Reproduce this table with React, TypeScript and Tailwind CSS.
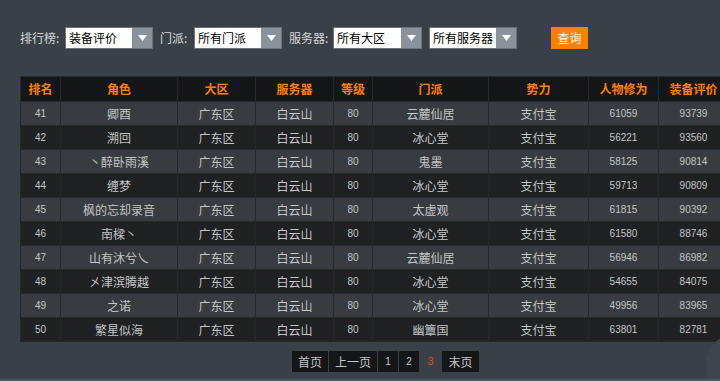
import React from "react";

const rows = [
  ["41", "卿酉", "云麓仙居", "61059", "93739"],
  ["42", "溯回", "冰心堂", "56221", "93560"],
  ["43", "丶醉卧雨溪", "鬼墨", "58125", "90814"],
  ["44", "缠梦", "冰心堂", "59713", "90809"],
  ["45", "枫的忘却录音", "太虚观", "61815", "90392"],
  ["46", "南樑丶", "冰心堂", "61580", "88746"],
  ["47", "山有沐兮乀", "云麓仙居", "56946", "86982"],
  ["48", "㐅津滨腾越", "冰心堂", "54655", "84075"],
  ["49", "之诺", "冰心堂", "49956", "83965"],
  ["50", "繁星似海", "幽簟国", "63801", "82781"],
];

const cjk = "font-['Noto_Sans_CJK_SC','Noto_Sans',sans-serif]";
const num = "font-['Liberation_Sans',Arial,sans-serif]";

function Select({ value, w }: { value: string; w: string }) {
  return (
    <div className={`flex h-[22px] ${w} border border-[#6c737b]`}>
      <div className={`flex-1 bg-white text-black text-[12px] leading-[20px] pl-[3px] ${cjk}`}>{value}</div>
      <div className="w-[20px] bg-[#8a929c] flex items-center justify-center">
        <svg width="9" height="6" viewBox="0 0 9 6">
          <path d="M0 0 H9 L4.5 6 Z" fill="#ffffff" />
        </svg>
      </div>
    </div>
  );
}

export default function App() {
  const headers = ["排名", "角色", "大区", "服务器", "等级", "门派", "势力", "人物修为", "装备评价"];
  const widths = [40, 117, 78, 78, 39, 116, 100, 70, 70];
  return (
    <div className={`relative w-[720px] h-[381px] overflow-hidden bg-[#3a4048] border-b-2 border-[#4f565d] ${cjk}`}>
      <div className="flex items-center pl-[20px] pt-[27px] h-[49px]">
        <div className="w-[45px] text-[12px] text-[#d6d8da]">排行榜:</div>
        <Select value="装备评价" w="w-[88px]" />
        <div className="ml-[7px] w-[34px] text-[12px] text-[#d6d8da]">门派:</div>
        <Select value="所有门派" w="w-[88px]" />
        <div className="ml-[7px] w-[44px] text-[12px] text-[#d6d8da]">服务器:</div>
        <Select value="所有大区" w="w-[89px]" />
        <div className="ml-[7px]">
          <Select value="所有服务器" w="w-[88px]" />
        </div>
        <div className="ml-[34px] w-[37px] h-[22px] bg-[#ff7f00] text-white text-[12px] leading-[22px] text-center">查询</div>
      </div>

      <div className="pl-[20px] mt-[27px]">
        <table className="table-fixed border-collapse w-[708px]">
          <colgroup>
            {widths.map((w, i) => (
              <col key={i} style={{ width: w }} />
            ))}
          </colgroup>
          <thead>
            <tr className="h-[25px] bg-[#151617]">
              {headers.map((h) => (
                <th key={h} className="border border-[#26292c] text-[12px] font-bold text-[#ff7f00] p-0 text-center">
                  {h}
                </th>
              ))}
            </tr>
          </thead>
          <tbody>
            {rows.map((r, i) => (
              <tr key={r[0]} className={`h-[24px] ${i % 2 === 0 ? "bg-[#383c40]" : "bg-[#1f2123]"} text-[#c3c5c7]`}>
                <td className={`border border-[#26292c] text-center text-[10px] p-0 ${num}`}>{r[0]}</td>
                <td className="border border-[#26292c] text-center text-[12px] p-0">{r[1]}</td>
                <td className="border border-[#26292c] text-center text-[12px] p-0">广东区</td>
                <td className="border border-[#26292c] text-center text-[12px] p-0">白云山</td>
                <td className={`border border-[#26292c] text-center text-[10px] p-0 ${num}`}>80</td>
                <td className="border border-[#26292c] text-center text-[12px] p-0">{r[2]}</td>
                <td className="border border-[#26292c] text-center text-[12px] p-0">支付宝</td>
                <td className={`border border-[#26292c] text-center text-[10px] p-0 ${num}`}>{r[3]}</td>
                <td className={`border border-[#26292c] text-center text-[10px] p-0 ${num}`}>{r[4]}</td>
              </tr>
            ))}
          </tbody>
        </table>
      </div>

      <div className="flex mt-[9px] ml-[292px] h-[21px] gap-[1px] text-[12px] text-[#c3c5c7]">
        <div className="w-[36px] bg-[#151617] text-center leading-[21px]">首页</div>
        <div className="w-[48px] bg-[#151617] text-center leading-[21px]">上一页</div>
        <div className={`w-[20px] bg-[#151617] text-center leading-[21px] text-[10px] ${num}`}>1</div>
        <div className={`w-[20px] bg-[#151617] text-center leading-[21px] text-[10px] ${num}`}>2</div>
        <div className={`w-[21px] text-center leading-[21px] text-[11px] text-[#e8461e] ${num}`}>3</div>
        <div className="w-[37px] bg-[#151617] text-center leading-[21px]">末页</div>
      </div>

      <div className="absolute left-[706px] top-[333px] w-[64px] h-[64px] rounded-full bg-[#3f454d]" />
    </div>
  );
}
